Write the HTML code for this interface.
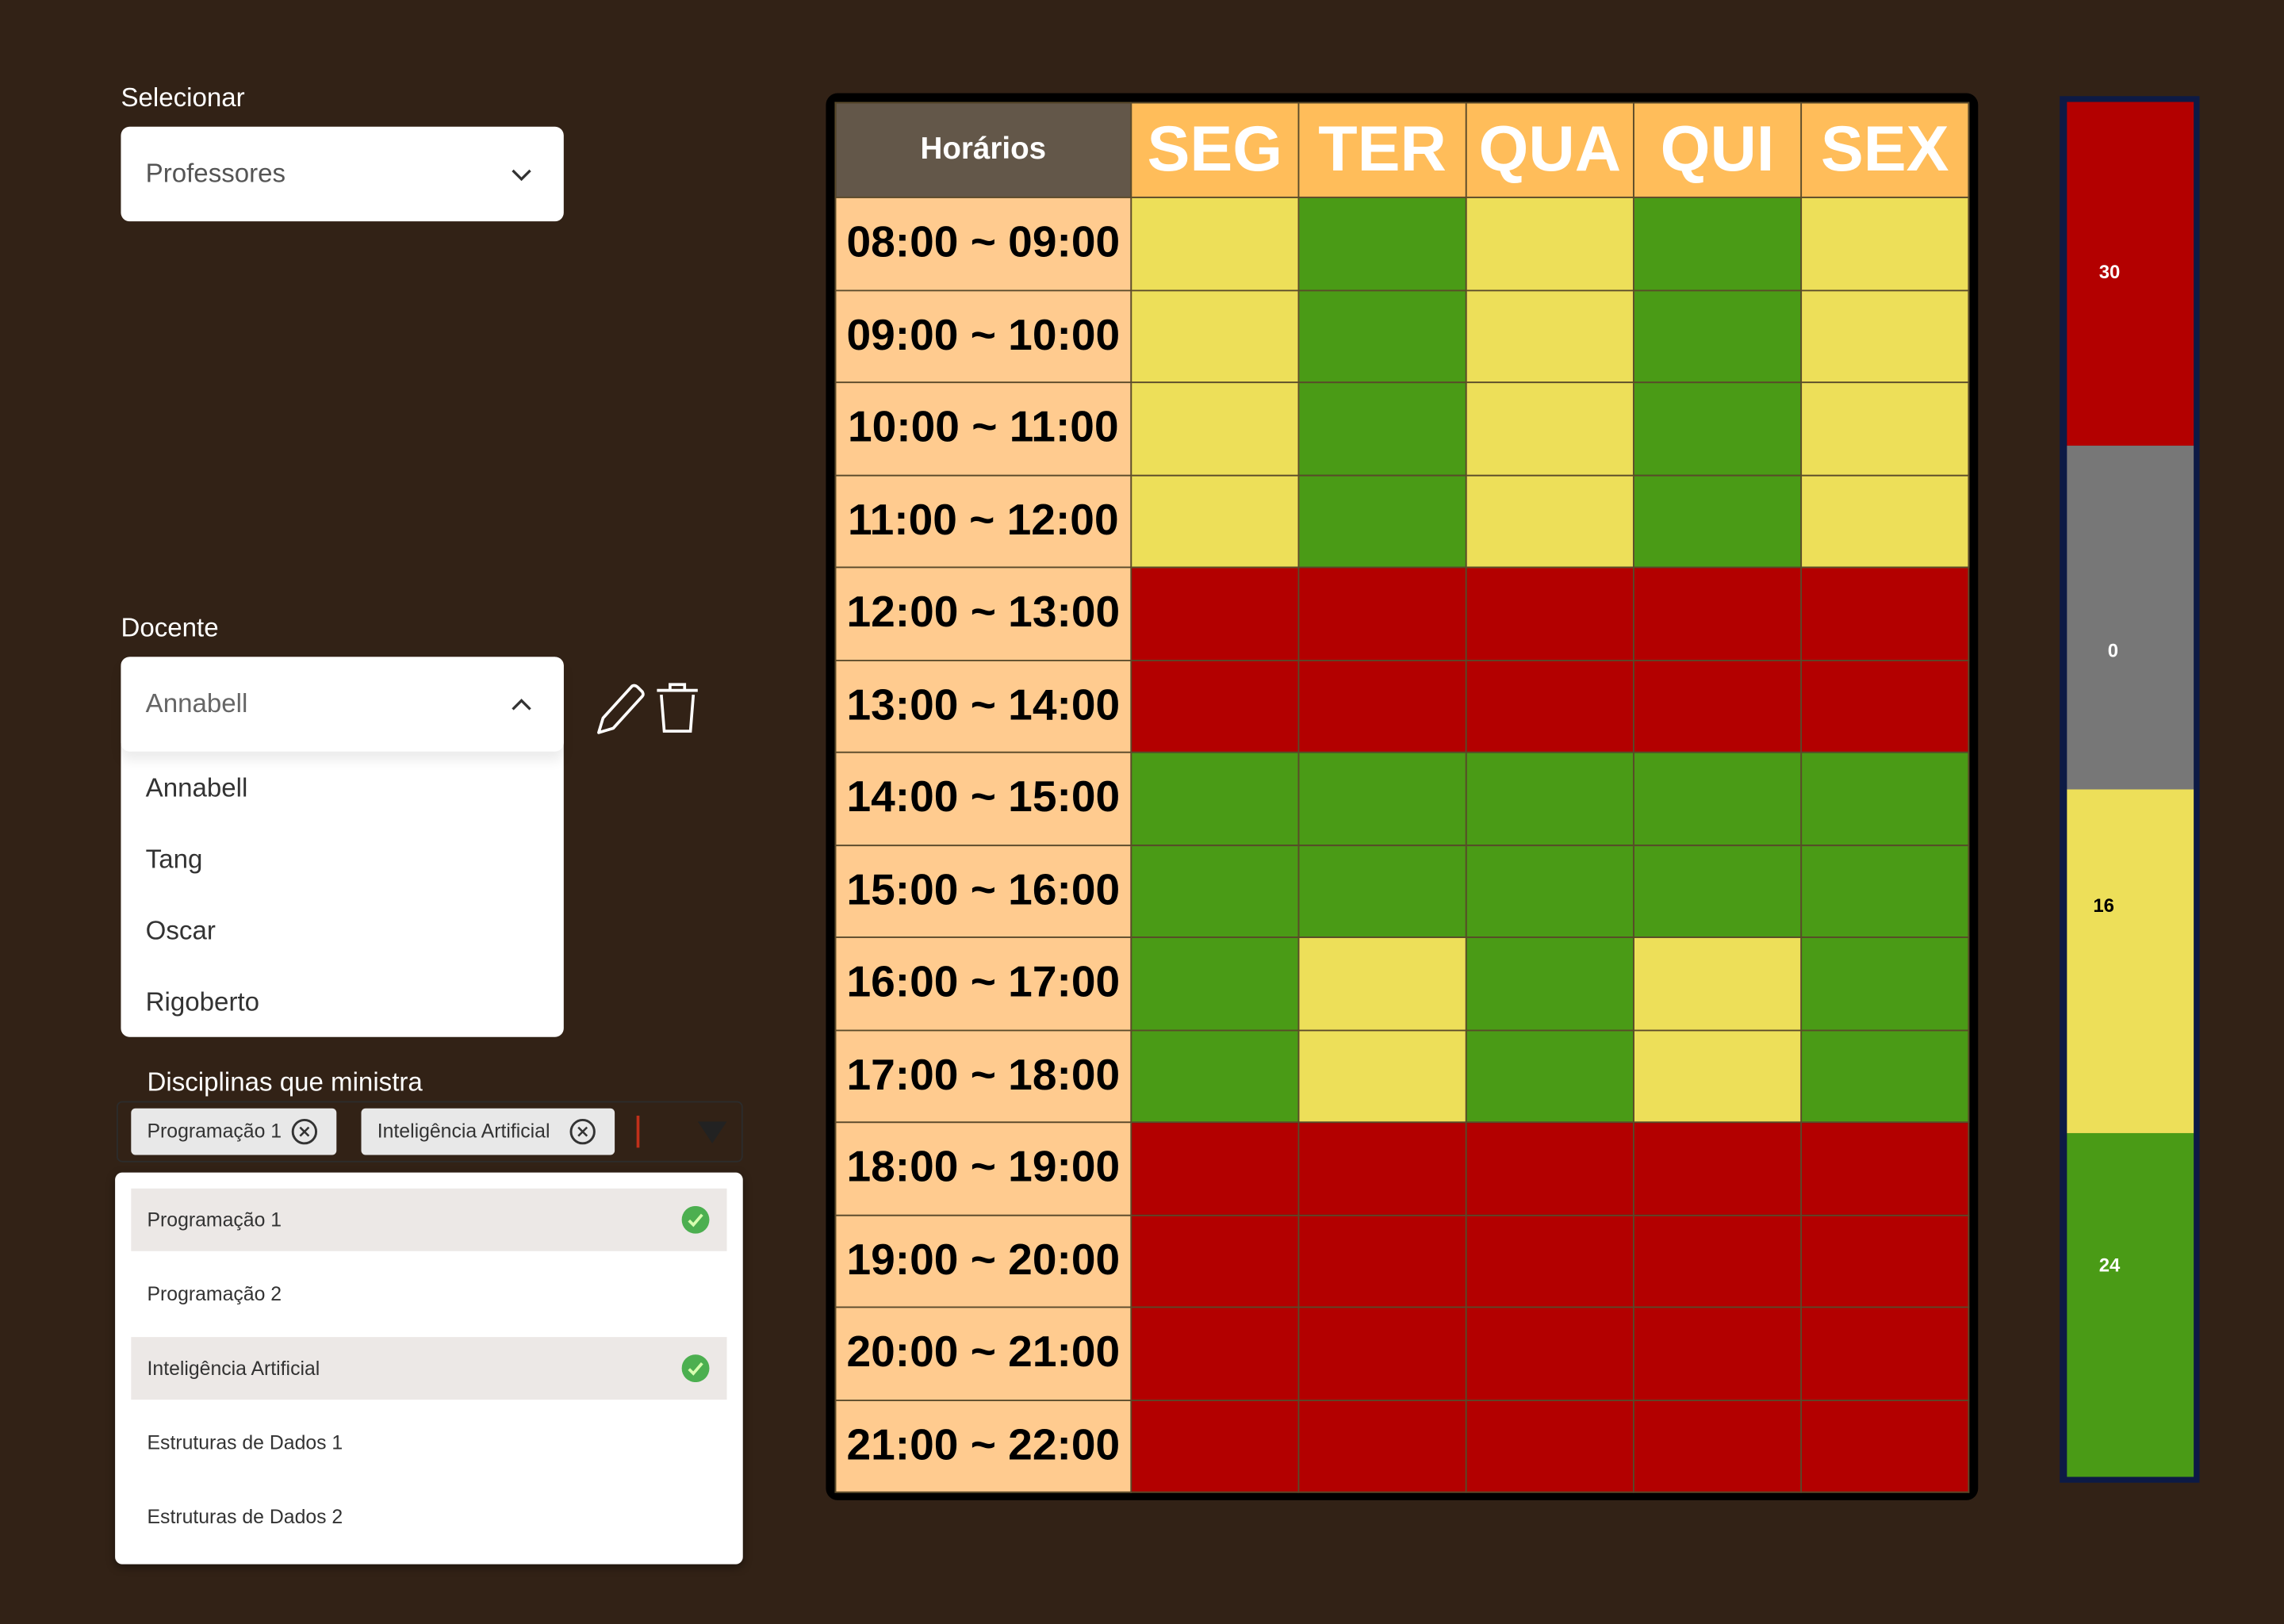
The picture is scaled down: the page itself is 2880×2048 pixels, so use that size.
<!DOCTYPE html>
<html><head><meta charset="utf-8"><style>
html,body{margin:0;padding:0;}
body{width:2880px;height:2048px;overflow:hidden;background:#322216;font-family:"Liberation Sans",sans-serif;}
#w{position:absolute;left:0;top:0;width:1568px;height:1115px;transform:scale(1.83673,1.83673);transform-origin:0 0;}
.a{position:absolute;}
.lbl{color:#fff;font-size:18px;}
.sel{background:#fff;border-radius:6px;}
.t{color:#555;font-size:18px;}
.opt{color:#333;font-size:18px;}
.chip{background:#e8e8e8;border-radius:3px;height:32px;top:761px;font-size:13.5px;color:#333;line-height:32px;padding-left:11px;box-sizing:border-box;}
.xc{position:absolute;top:7px;width:18px;height:18px;display:block;}
.li{left:90px;width:409px;height:43px;font-size:13.5px;color:#333;line-height:43px;padding-left:11px;box-sizing:border-box;}
.ck{position:absolute;right:12px;top:12px;width:19px;height:19px;display:block;}
.ck svg,.xc svg{display:block;}
table{border-collapse:collapse;position:absolute;left:573px;top:70px;}
td{padding:0;border:1px solid #5a4a2a;text-align:center;}
.h td{height:64px;}
.tm{width:202px;background:#ffcb8f;font-weight:bold;font-size:30px;color:#000;height:62.5px;}
.d{width:114px;color:#fff;font-weight:bold;font-size:44px;background:#ffbd5a;}
.Y{background:#eddf59;}.G{background:#4a9b16;}.R{background:#b30000;}
</style></head><body><div id="w">
<div class="a lbl" style="left:83px;top:57px;">Selecionar</div>
<div class="a sel" style="left:83px;top:87px;width:304px;height:65px;"></div>
<div class="a t" style="left:100px;top:109px;">Professores</div>
<svg class="a" style="left:350px;top:114px" width="16" height="12" viewBox="0 0 16 12"><path d="M2 3l6 6 6-6" fill="none" stroke="#333" stroke-width="1.8"/></svg>

<div class="a lbl" style="left:83px;top:421px;">Docente</div>
<div class="a sel" style="left:83px;top:451px;width:304px;height:261px;"></div>
<div class="a" style="left:83px;top:451px;width:304px;height:65px;border-radius:6px;box-shadow:0 6px 8px rgba(0,0,0,0.08);background:#fff;"></div>
<div class="a t" style="left:100px;top:473px;color:#666;">Annabell</div>
<svg class="a" style="left:350px;top:478px" width="16" height="12" viewBox="0 0 16 12"><path d="M2 9l6-6 6 6" fill="none" stroke="#333" stroke-width="1.8"/></svg>
<div class="a opt" style="left:100px;top:531px;">Annabell</div>
<div class="a opt" style="left:100px;top:580px;">Tang</div>
<div class="a opt" style="left:100px;top:629px;">Oscar</div>
<div class="a opt" style="left:100px;top:678px;">Rigoberto</div>
<svg class="a" style="left:408px;top:468px" width="76" height="38" viewBox="0 0 76 38"><path d="M3 35l3-10L26 3q2-1 4 1l3 3q1 2 0 3L13 32z" fill="none" stroke="#fff" stroke-width="2" stroke-linejoin="round"/><path d="M43 6h28M52 6V2h10v4M46 9l2 25h18l2-25" fill="none" stroke="#fff" stroke-width="2"/></svg>

<div class="a lbl" style="left:101px;top:733px;">Disciplinas que ministra</div>
<div class="a" style="left:80px;top:756px;width:430px;height:42px;border:1.5px solid #2c2c2c;border-radius:4px;box-sizing:border-box;"></div>
<div class="a chip" style="left:90px;width:141px;">Programação 1<span class="xc" style="left:110px"><svg width="18" height="18"><circle cx="9" cy="9" r="8" fill="none" stroke="#333" stroke-width="1.6"/><path d="M6 6l6 6M12 6l-6 6" stroke="#333" stroke-width="1.4"/></svg></span></div>
<div class="a chip" style="left:248px;width:174px;">Inteligência Artificial<span class="xc" style="left:143px"><svg width="18" height="18"><circle cx="9" cy="9" r="8" fill="none" stroke="#333" stroke-width="1.6"/><path d="M6 6l6 6M12 6l-6 6" stroke="#333" stroke-width="1.4"/></svg></span></div>
<div class="a" style="left:437px;top:766px;width:2px;height:22px;background:#c0301a;"></div>
<svg class="a" style="left:479px;top:770px" width="20" height="15"><path d="M0 0h20L10 15z" fill="#222"/></svg>

<div class="a" style="left:79px;top:805px;width:431px;height:269px;background:#fff;border-radius:5px;box-shadow:0 2px 6px rgba(0,0,0,0.4);"></div>
<div class="a li" style="top:816px;background:#ece8e6;">Programação 1<span class="ck"><svg width="19" height="19"><circle cx="9.5" cy="9.5" r="9.5" fill="#4caf50"/><path d="M5 10l3 3 6-7" fill="none" stroke="#d8ffb0" stroke-width="2"/></svg></span></div>
<div class="a li" style="top:867px;">Programação 2</div>
<div class="a li" style="top:918px;background:#ece8e6;">Inteligência Artificial<span class="ck"><svg width="19" height="19"><circle cx="9.5" cy="9.5" r="9.5" fill="#4caf50"/><path d="M5 10l3 3 6-7" fill="none" stroke="#d8ffb0" stroke-width="2"/></svg></span></div>
<div class="a li" style="top:969px;">Estruturas de Dados 1</div>
<div class="a li" style="top:1020px;">Estruturas de Dados 2</div>

<div class="a" style="left:567px;top:64px;width:791px;height:966px;background:#000;border-radius:8px;"></div>
<table>
<tr class="h"><td style="width:202px;background:#635749;color:#fff;font-weight:bold;font-size:21px;">Horários</td><td class="d">SEG</td><td class="d">TER</td><td class="d">QUA</td><td class="d">QUI</td><td class="d">SEX</td></tr>
<tr><td class="tm">08:00 ~ 09:00</td><td class="Y"></td><td class="G"></td><td class="Y"></td><td class="G"></td><td class="Y"></td></tr>
<tr><td class="tm">09:00 ~ 10:00</td><td class="Y"></td><td class="G"></td><td class="Y"></td><td class="G"></td><td class="Y"></td></tr>
<tr><td class="tm">10:00 ~ 11:00</td><td class="Y"></td><td class="G"></td><td class="Y"></td><td class="G"></td><td class="Y"></td></tr>
<tr><td class="tm">11:00 ~ 12:00</td><td class="Y"></td><td class="G"></td><td class="Y"></td><td class="G"></td><td class="Y"></td></tr>
<tr><td class="tm">12:00 ~ 13:00</td><td class="R"></td><td class="R"></td><td class="R"></td><td class="R"></td><td class="R"></td></tr>
<tr><td class="tm">13:00 ~ 14:00</td><td class="R"></td><td class="R"></td><td class="R"></td><td class="R"></td><td class="R"></td></tr>
<tr><td class="tm">14:00 ~ 15:00</td><td class="G"></td><td class="G"></td><td class="G"></td><td class="G"></td><td class="G"></td></tr>
<tr><td class="tm">15:00 ~ 16:00</td><td class="G"></td><td class="G"></td><td class="G"></td><td class="G"></td><td class="G"></td></tr>
<tr><td class="tm">16:00 ~ 17:00</td><td class="G"></td><td class="Y"></td><td class="G"></td><td class="Y"></td><td class="G"></td></tr>
<tr><td class="tm">17:00 ~ 18:00</td><td class="G"></td><td class="Y"></td><td class="G"></td><td class="Y"></td><td class="G"></td></tr>
<tr><td class="tm">18:00 ~ 19:00</td><td class="R"></td><td class="R"></td><td class="R"></td><td class="R"></td><td class="R"></td></tr>
<tr><td class="tm">19:00 ~ 20:00</td><td class="R"></td><td class="R"></td><td class="R"></td><td class="R"></td><td class="R"></td></tr>
<tr><td class="tm">20:00 ~ 21:00</td><td class="R"></td><td class="R"></td><td class="R"></td><td class="R"></td><td class="R"></td></tr>
<tr><td class="tm">21:00 ~ 22:00</td><td class="R"></td><td class="R"></td><td class="R"></td><td class="R"></td><td class="R"></td></tr>
</table>

<div class="a" style="left:1414px;top:66px;width:96px;height:952px;background:#0d1a45;"></div>
<div class="a R" style="left:1419px;top:70px;width:87px;height:236px;"></div>
<div class="a" style="left:1419px;top:306px;width:87px;height:236px;background:#777;"></div>
<div class="a Y" style="left:1419px;top:542px;width:87px;height:236px;"></div>
<div class="a G" style="left:1419px;top:778px;width:87px;height:236px;"></div>
<div class="a" style="left:1441px;top:179px;color:#fff;font-weight:bold;font-size:13px;">30</div>
<div class="a" style="left:1447px;top:439px;color:#fff;font-weight:bold;font-size:13px;">0</div>
<div class="a" style="left:1437px;top:614px;color:#000;font-weight:bold;font-size:13px;">16</div>
<div class="a" style="left:1441px;top:861px;color:#fff;font-weight:bold;font-size:13px;">24</div>
</div></body></html>
